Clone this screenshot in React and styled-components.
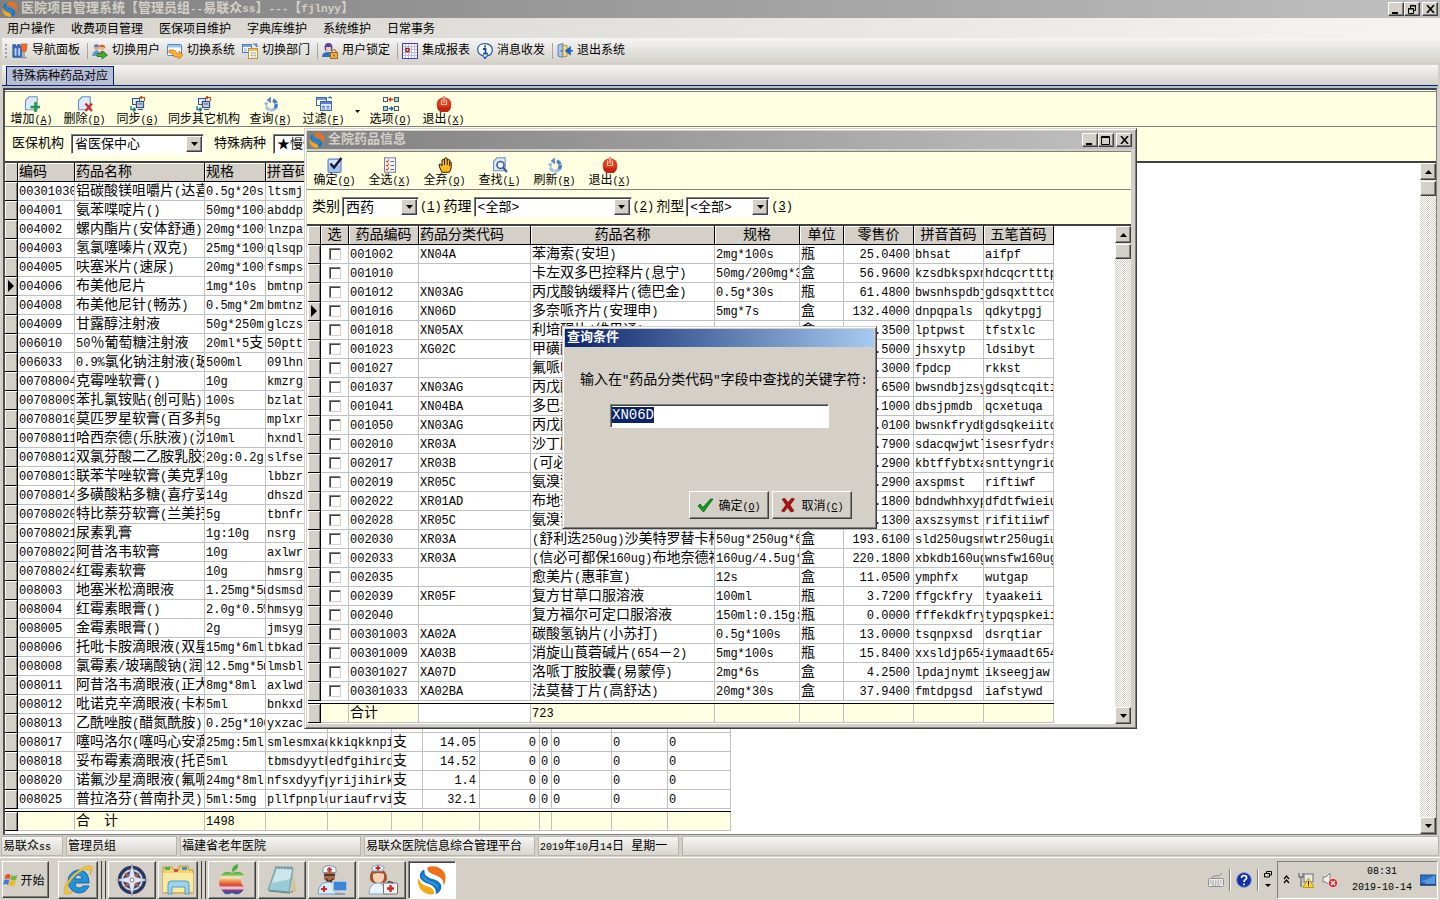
import React, { useEffect, useRef } from "react";
import styled, { createGlobalStyle, css } from "styled-components";

const GlobalStyle = createGlobalStyle`
  * {
    box-sizing: border-box;
  }
  html, body {
    margin: 0;
    height: 100%;
    overflow: hidden;
  }
  body, button, input, select, table {
    font-family: "Liberation Mono", "Noto Sans CJK SC", monospace;
    font-size: 12px;
    color: #000;
  }
  button {
    margin: 0;
    padding: 0;
    border: 0;
    background: none;
    white-space: nowrap;
  }
`;

const raised = css`
  border: 1px solid;
  border-color: #fff #404040 #404040 #fff;
  box-shadow: inset -1px -1px #808080;
  background: #d4d0c8;
`;

const sunken = css`
  border: 1px solid;
  border-color: #808080 #fff #fff #808080;
  box-shadow: inset 1px 1px #404040;
  background: #fff;
`;

const Latin = styled.span`
  font-size: calc(1em - 2px);
  line-height: 1px;
`;

// half width characters are set two pixels smaller than the hanzi
const Mixed = ({ children }) =>
  String(children)
    .split(/([\x21-\x7e]+)/)
    .map((part, i) => (i % 2 ? <Latin key={i}>{part}</Latin> : part));

const Hot = ({ k }) => (
  <Latin>
    (<u>{k}</u>)
  </Latin>
);

/* ---------- icons ---------- */

const Svg = ({ size = 16, box = 16, children }) => (
  <svg width={size} height={size} viewBox={`0 0 ${box} ${box}`} aria-hidden="true">
    {children}
  </svg>
);

const LogoIcon = ({ size = 16 }) => (
  <Svg size={size} box={32}>
    <path d="M11 3C18-1 27 3 30 10c1 4 0 10-2 12 1-6-3-9-8-11-5-2-9-3-9-8z" fill="#f07018" />
    <path d="M8 5c-1 6 3 8 9 10 7 2 11 6 8 12-1 2-4 4-5 4 1-6-3-9-8-11C5 18 1 13 4 8c1-2 3-3 4-3z" fill="#1272c4" />
    <path d="M6 9c1 5 6 7 11 9 3 1 6 4 6 8-3-5-7-6-11-8C7 16 5 13 6 9z" fill="#2a9be0" />
    <path d="M2 14c1 6 6 8 10 9 5 2 7 5 6 8-8 2-16-4-17-12 0-2 0-4 1-5z" fill="#f5a818" />
  </Svg>
);

const NavIcon = () => (
  <Svg box={18}>
    <path d="M1 2h3v2h2V2h3v2h2v12H1z" fill="#3d6fc0" stroke="#27508f" />
    <path d="M3 6h2v8H3zM7 6h2v8H7z" fill="#bcd7f5" />
    <path d="M10 1h7l-1 8q-2.500 2-5 0z" fill="#f26b2a" stroke="#b94b18" strokeWidth=".6" />
    <path d="M13.500 10v6M10.500 16.500h6" stroke="#8a8a9a" strokeWidth="1.400" />
  </Svg>
);

const UsersIcon = () => (
  <Svg>
    <circle cx="4.500" cy="4" r="2.800" fill="#e9a178" />
    <path d="M2 4q0-4 5-2L6 4z" fill="#4d87c8" />
    <circle cx="10" cy="4.500" r="2.800" fill="#f0b58e" />
    <path d="M7 4q1-4 6-1v2q-3-2-6-1z" fill="#c65a3b" />
    <path d="M0 13q1-6 6-6l2 6z" fill="#5a98d6" />
    <path d="M5 13q1-5 6-5 3 1 4 5z" fill="#e66a52" />
    <path d="M5 10.500h5V8l5.500 4-5.500 4v-2.500H5z" fill="#3fae3c" stroke="#1d7a25" strokeWidth=".8" />
  </Svg>
);

const SystemIcon = () => (
  <Svg>
    <rect x=".5" y="1.500" width="14" height="11" rx="1" fill="#fff" stroke="#4f86c6" />
    <path d="M1 2h13v2.500H1z" fill="#9cc4ee" />
    <path d="M2 7h4q3 0 4 4h2V8l4 4-4 4v-2H9q-3 0-4-4H2z" fill="#ffb32b" stroke="#c46d0c" strokeWidth=".8" />
  </Svg>
);

const DeptIcon = () => (
  <Svg>
    <rect x=".5" y="1.500" width="9" height="8" fill="#fff" stroke="#4a7fc4" />
    <path d="M1 2h8v2H1z" fill="#79a7e0" />
    <path d="M2 6h3M2 8h3" stroke="#7fa6d8" />
    <path d="M11 1h4v3M13 2l2 2" stroke="#3a6ab8" fill="none" />
    <rect x="6.500" y="5.500" width="9" height="10" fill="#fffdf0" stroke="#c68e2e" />
    <path d="M7 6h8v2H7z" fill="#f2c263" />
    <path d="M8 10h6M8 12.500h6M10 9v6M13 9v6" stroke="#a9a9a9" strokeWidth=".7" />
  </Svg>
);

const LockUserIcon = () => (
  <Svg>
    <path d="M2.500 5q0-5 4-5t4 5l-1 3h-6z" fill="#5a3fa0" />
    <path d="M4 4h5v3q-2.500 3-5 0z" fill="#efc5b4" />
    <path d="M0 14q0-5 6-5 5 0 6 5z" fill="#2f6fb4" />
    <rect x="8.500" y="9.500" width="7" height="6" fill="#f2b04a" stroke="#a8681a" />
    <path d="M10 9V8q2-3 4 0v1" fill="none" stroke="#a8681a" strokeWidth="1.200" />
    <path d="M12 11.500v2" stroke="#5c3608" />
  </Svg>
);

const ReportIcon = () => (
  <Svg>
    <rect x=".5" y=".5" width="15" height="15" fill="#fff" stroke="#4040b8" />
    <path d="M1 3.500h14M1 6.500h14M1 9.500h14M1 12.500h14M3.500 1v14M6.500 1v14M9.500 1v14M12.500 1v14" stroke="#b8b8ec" />
    <rect x="4" y="5.500" width="3" height="3" fill="#fff" stroke="#a01818" strokeWidth="1.400" />
  </Svg>
);

const InfoIcon = () => (
  <Svg>
    <path d="M8 .7c5 0 7.300 3 7.300 6s-2 5.500-5 6L8 15.500 6 12.600c-3-.5-5.300-3-5.300-6S3 .7 8 .7z" fill="#fff" stroke="#1c5bb5" strokeWidth="1.300" />
    <path d="M8 2.500v2M6 6h2.500v4.500M6 10.700h5" stroke="#174a9c" strokeWidth="1.800" fill="none" />
  </Svg>
);

const DoorIcon = () => (
  <Svg>
    <path d="M1 2l5-1.500v14L1 13z" fill="#a9c6ea" stroke="#4d72a8" strokeWidth=".8" />
    <path d="M6 2.500h4v11H6z" fill="#f4dc90" stroke="#a98733" strokeWidth=".8" />
    <circle cx="4.500" cy="8" r=".8" fill="#284a80" />
    <path d="M16 7.800h-3.500M13 4.500L9 7.700l4 3.300z" fill="#1a66c8" stroke="#1a66c8" strokeWidth="1.600" />
  </Svg>
);

const PageShape = () => (
  <path d="M5 .8h8.200v13H1.500V4.500z" fill="#dce9fa" stroke="#6a8fc4" strokeWidth="1.100" />
);

const AddIcon = () => (
  <Svg>
    <PageShape />
    <path d="M11.500 6v10M6.500 11h10" stroke="#1f9a4c" strokeWidth="2.600" />
  </Svg>
);

const DeleteIcon = () => (
  <Svg>
    <PageShape />
    <path d="M8.500 7.500l6.500 7.500M15 7.500L8.500 15" stroke="#d02a2a" strokeWidth="2.200" />
  </Svg>
);

const SyncIcon = () => (
  <Svg>
    <rect x="2.500" y="2.500" width="7" height="6" fill="#e8eef8" stroke="#35507c" />
    <rect x="6.500" y="5.500" width="7" height="6" fill="#cfdcf0" stroke="#35507c" strokeWidth="1.300" />
    <path d="M8 13.500h5M8 8h4" stroke="#35507c" strokeWidth="1.200" />
    <path d="M10 1.500h4.500V5M12 0l-2 1.500L12 3" stroke="#c04820" strokeWidth="1.200" fill="none" />
    <path d="M1 10v3.500h4M3.500 11.500l2 2-2 2" stroke="#17708c" strokeWidth="1.300" fill="none" />
  </Svg>
);

const RefreshIcon = () => (
  <Svg>
    <path d="M10 4a5.200 5.200 0 1 1-7 6" fill="none" stroke="#a4c2e4" strokeWidth="3.400" strokeDasharray="4.500 .7" />
    <path d="M10 4a5.200 5.200 0 0 1 1 9" fill="none" stroke="#4a7cba" strokeWidth="3.400" strokeDasharray="4.500 .7" />
    <path d="M8 .5v7L3.500 4z" fill="#5b8bc8" />
    <path d="M1 7l4-1-1 5z" fill="#8fb2dc" />
  </Svg>
);

const FilterIcon = () => (
  <Svg>
    <rect x=".5" y="1.500" width="10" height="8" fill="#fff" stroke="#3a68b4" />
    <path d="M1 2h9v2H1z" fill="#6e9ada" />
    <path d="M12 1.500h3.500M14 0l1.500 3" stroke="#3a68b4" fill="none" />
    <rect x="4.500" y="5.500" width="11" height="9" fill="#dce9fb" stroke="#3a68b4" />
    <path d="M5 6h10v2H5zM6 10h3v1.500H6zM10.500 10h3v1.500h-3zM6 12.500h3v1H6zM10.500 12.500h3v1h-3z" fill="#5683cc" />
  </Svg>
);

const OptionIcon = () => (
  <Svg>
    <g fill="#fff" stroke="#46566e">
      <rect x=".5" y="1.500" width="4" height="4" />
      <rect x="11.500" y="1.500" width="4" height="4" fill="#9fd4e8" />
      <rect x=".5" y="10.500" width="4" height="4" fill="#9fd4e8" />
      <rect x="11.500" y="10.500" width="4" height="4" />
    </g>
    <path d="M10.500 3.500H6M8 1.500l-2 2 2 2" fill="none" stroke="#c84a18" strokeWidth="1.300" />
    <path d="M5.500 12.500H10M8 10.500l2 2-2 2" fill="none" stroke="#186c94" strokeWidth="1.300" />
  </Svg>
);

const PowerIcon = () => (
  <Svg>
    <circle cx="8" cy="8.500" r="7.300" fill="#e03a1c" />
    <path d="M1 10a7 7 0 0 0 14 0q-7 3-14 0z" fill="#c22410" />
    <path d="M5.500 3.500v5h5v-5" fill="none" stroke="#ffc8a8" strokeWidth="1.200" />
    <path d="M8 0v6.500" stroke="#fff0e0" strokeWidth="2.400" />
    <path d="M8 0v6.500" stroke="#d03a18" strokeWidth="1" />
  </Svg>
);

const CheckDocIcon = () => (
  <Svg>
    <rect x="1" y="2" width="13" height="13.500" rx="1" fill="#a8c0ec" stroke="#5878b8" />
    <path d="M2 3h11v5H2z" fill="#d4e2fa" />
    <path d="M3.500 6.500l3.500 4L14.500 1" fill="none" stroke="#10183c" strokeWidth="2.400" />
  </Svg>
);

const ListIcon = () => (
  <Svg>
    <rect x="2.500" y=".8" width="11" height="14.500" fill="#f4f4fa" stroke="#7c7c98" />
    <path d="M4 4l1.200 1.200L7 2.500M4 8l1.200 1.200L7 6.500M4 12l1.200 1.200L7 10.500" fill="none" stroke="#d05018" strokeWidth="1.100" />
    <path d="M8.500 4.500H12M8.500 8.500H12M8.500 12.500H12" stroke="#60608c" />
  </Svg>
);

const HandIcon = () => (
  <Svg>
    <path d="M5 15.300L2.500 10 2 7.500l1.500-.5L5 9V3l1.500-.7L7.500 3V1.500L9 .7l1.300.8V3l1.300-.5L12.800 3v2l1.400.3V11L12.500 15.300z" fill="#ffb81c" stroke="#2c1c00" />
    <path d="M7.500 3v5M10.200 3v5M12.600 5v4" stroke="#2c1c00" />
  </Svg>
);

const FindIcon = () => (
  <Svg>
    <PageShape />
    <circle cx="8.500" cy="8" r="3.500" fill="#f4faff" stroke="#3a5c98" strokeWidth="1.600" />
    <path d="M11 10.500l4 4.500" stroke="#3a5c98" strokeWidth="2.200" />
  </Svg>
);

const TickIcon = () => (
  <Svg>
    <path d="M1 9l2-2 3 3.500L13.500 2 16 2 6.500 15z" fill="#10a020" stroke="#045c10" strokeWidth=".8" />
  </Svg>
);

const CrossIcon = () => (
  <Svg>
    <path d="M2 2l3-.5L8 5.500 12 1l2.500 1L10 8l4 6-3 1-3.500-4.500L4 15l-2.500-1L6 8z" fill="#b01010" stroke="#6c0404" strokeWidth=".6" />
  </Svg>
);

const FlagIcon = () => (
  <Svg>
    <path d="M2.500 3q3-2 5 0L6.500 7.500q-2.500-1.800-5 0z" fill="#e8502c" />
    <path d="M8.300 3.300q3 1.500 6-.6L13.300 7.500q-3 2-6 .3z" fill="#72b83c" />
    <path d="M1.300 8.300q2.500-1.800 5 0L5 13q-2.500-1.800-5 0z" fill="#3a7cd8" />
    <path d="M7 8.600q3 1.500 6-.4L11.800 13q-3 2-6 .3z" fill="#f6b820" />
  </Svg>
);

const IeIcon = () => (
  <Svg size={32} box={32}>
    <path d="M27 19H13q0 5 4 5 3 0 4-2h6q-3 7-10 7Q7 28 6 18 6 8 16 6q11 0 11 13zm-7-4q0-4-3.500-4T13 15z" fill="#2592d8" stroke="#1268ac" />
    <path d="M3 30Q-1 24 10 12 23 0 29 2q3 2-1 9 1-6-2-6Q19 5 10 15 3 24 6 27q2 2 6 0-6 5-9 3z" fill="#f4c53a" stroke="#c9961a" strokeWidth=".5" />
  </Svg>
);

const CompassIcon = () => (
  <Svg size={32} box={32}>
    <circle cx="16" cy="16" r="12.500" fill="#d8dce6" stroke="#2c3860" strokeWidth="3.500" />
    <circle cx="16" cy="16" r="9" fill="#36406c" />
    <path d="M8 8l6.500 3.500L16 16l-4.500-1.500zM24 8l-3.500 6.500L16 16l1.500-4.500zM8 24l3.500-6.500L16 16l-1.500 4.500zM24 24l-6.500-3.500L16 16l4.500 1.500z" fill="#b06050" />
    <path d="M16 0l3 13 13 3-13 3-3 13-3-13-13-3 13-3z" fill="#e4e8f0" stroke="#8890a8" strokeWidth=".6" />
    <circle cx="16" cy="16" r="2" fill="#fff" stroke="#707898" />
  </Svg>
);

const FolderIcon = () => (
  <Svg size={32} box={32}>
    <path d="M1 3h9l2 3h5V2h9l1 4h4v23H1z" fill="#f0d272" stroke="#c39a35" />
    <path d="M3 3h5v3H3z" fill="#52b04a" />
    <path d="M12 5h4v3h-4z" fill="#d8503c" />
    <path d="M20 3h5v3h-5z" fill="#4a8ed0" />
    <path d="M1 9h30v19H1z" fill="#fbe9a0" />
    <path d="M6 30V20q0-3 3-3h15q3 0 3 3v10h-4v-7H10v7z" fill="#9bd2f0" stroke="#4f9cc8" />
  </Svg>
);

const AppleIcon = () => (
  <Svg size={32} box={32}>
    <defs>
      <linearGradient id="rainbow" x1="0" y1="0" x2="0" y2="1">
        <stop offset=".1" stopColor="#67b545" />
        <stop offset=".25" stopColor="#f2ead0" />
        <stop offset=".4" stopColor="#f19a4a" />
        <stop offset=".6" stopColor="#dc4038" />
        <stop offset=".72" stopColor="#f0e4e8" />
        <stop offset=".84" stopColor="#8c2c6c" />
        <stop offset=".95" stopColor="#2c5cb0" />
      </linearGradient>
    </defs>
    <path d="M16 9q4-2 8-1 3 1 4 3-4 3-3 7 1 4 4 5-2 5-6 7-3 1-7-1-4 2-7 1-5-5-6-11 0-8 6-11 4-1 7 1z" fill="url(#rainbow)" />
    <path d="M16 8q-1-6 6-8 1 6-6 8z" fill="#4fae3c" />
  </Svg>
);

const NotepadIcon = () => (
  <Svg size={32} box={32}>
    <path d="M25 3l6 23-5 4z" fill="#d0c49c" />
    <path d="M10 3l17 1-4 24-21-2z" fill="#9ccad4" stroke="#6898a4" />
    <path d="M11 5l15 1-2 9-18 4z" fill="#cce6ea" />
    <path d="M3 27l20 2 4-2" fill="none" stroke="#607880" />
    <path d="M10 2v3M13 2v3M16 2v3M19 2v3M22 2v3M25 2v3" stroke="#7a8a92" />
  </Svg>
);

const DoctorIcon = () => (
  <Svg size={32} box={32}>
    <path d="M8 8h11v7q-5 7-11 0z" fill="#a86c42" />
    <path d="M7 4q6-5 13 0v5q-6-3-13 0z" fill="#f4f8fc" stroke="#6f98b8" />
    <path d="M13.500 3v5M11 5.500h5" stroke="#d02828" strokeWidth="1.800" />
    <path d="M8 11h11M10 15q4 5 7 0" stroke="#3c2414" strokeWidth="1.500" fill="none" />
    <path d="M2 30q0-12 11-12 6 1 7 6v6z" fill="#d8ecfa" stroke="#6fa0c8" />
    <path d="M8 22v6M5 25h6" stroke="#d02828" strokeWidth="2" />
    <rect x="17" y="17" width="14" height="10" fill="#3c84d4" stroke="#c8d4e0" strokeWidth="1.500" />
    <path d="M19 30h10" stroke="#8ca0b4" strokeWidth="2" />
  </Svg>
);

const NurseIcon = () => (
  <Svg size={32} box={32}>
    <path d="M4 15Q3 5 12 5t9 10q-1 4-5 4H9q-4 0-5-4z" fill="#a2542c" />
    <path d="M7 10q6-2 11 0v4q-1 5-5.500 5T7 14z" fill="#f6d0b0" />
    <path d="M6 3q6-4 12 0l-1 4H7z" fill="#e8f2fa" stroke="#86a8c4" />
    <path d="M12 1.500v5M9.500 4h5" stroke="#d02828" strokeWidth="1.800" />
    <path d="M3 30q0-11 9-11 7 0 8 11z" fill="#e6f2fc" stroke="#86a8c4" />
    <rect x="17.500" y="19" width="14" height="11" rx="1" fill="#f4f4f4" stroke="#707070" />
    <path d="M22 19q0-3 5 0" fill="none" stroke="#505050" strokeWidth="1.500" />
    <path d="M24.500 21v7M21 24.500h7" stroke="#d02828" strokeWidth="2.400" />
  </Svg>
);

/* ---------- shared controls ---------- */

const ComboBox = styled.span`
  display: inline-flex;
  width: ${(p) => p.$width}px;
  height: 20px;
  padding: 1px;
  ${sunken}

  & select {
    flex: 1;
    min-width: 0;
    appearance: none;
    border: 0;
    outline: 0;
    padding: 1px 2px 0;
    background: transparent;
    font-size: ${(p) => p.$size || 13}px;
    line-height: 16px;
  }
`;

const ComboArrow = styled.span`
  display: flex;
  align-items: center;
  justify-content: center;
  width: 16px;
  pointer-events: none;
  ${raised}
`;

const Combo = ({ id, width, size, value }) => (
  <ComboBox $width={width} $size={size}>
    <select id={id} defaultValue={value}>
      <option>{value}</option>
    </select>
    <ComboArrow>
      <svg width="7" height="4" viewBox="0 0 7 4"><path d="M0 0h7L3.500 4z" /></svg>
    </ComboArrow>
  </ComboBox>
);

const Bar = styled.div`
  display: flex;
  flex-direction: column;
  width: 16px;
  background: repeating-conic-gradient(#d4d0c8 0 25%, #fff 0 50%) 0 0 / 2px 2px;

  & button {
    display: flex;
    align-items: center;
    justify-content: center;
    width: 16px;
    height: 17px;
    ${raised}
  }
  & .thumb {
    height: 15px;
    margin: 1px 0 auto;
  }
`;

const ScrollBar = () => (
  <Bar>
    <button aria-label="向上">
      <svg width="7" height="4" viewBox="0 0 7 4"><path d="M0 4h7L3.500 0z" /></svg>
    </button>
    <button className="thumb" aria-label="滚动" />
    <button aria-label="向下">
      <svg width="7" height="4" viewBox="0 0 7 4"><path d="M0 0h7L3.500 4z" /></svg>
    </button>
  </Bar>
);

const TitleBar = styled.header`
  display: flex;
  align-items: center;
  flex-shrink: 0;
  gap: 3px;
  height: 18px;
  padding: 0 2px;
  background: linear-gradient(90deg, ${(p) => (p.$active ? "#0a246a, #a6caf0" : "#808080, #c0c0c0")});

  & h1 {
    flex: 1;
    margin: 0;
    font-size: 13px;
    line-height: 20px;
    font-weight: 700;
    white-space: nowrap;
    color: ${(p) => (p.$active ? "#fff" : "#d4d0c8")};
  }
`;

const Controls = styled.div`
  display: flex;

  & button {
    display: flex;
    align-items: center;
    justify-content: center;
    width: 16px;
    height: 14px;
    ${raised}
  }
  & button:last-child {
    margin-left: 2px;
  }
`;

const WindowControls = ({ restore }) => (
  <Controls>
    <button aria-label="最小化">
      <svg width="10" height="9"><path d="M1 7h6v2H1z" /></svg>
    </button>
    <button aria-label={restore ? "还原" : "最大化"}>
      <svg width="10" height="9" fill="none" stroke="#000">
        {restore ? (
          <>
            <path d="M3.500 3V.5h5v5H7M3 1h6" />
            <path d="M1.500 3.500h5v5h-5zM1 4h6" />
          </>
        ) : (
          <path d="M.5.5h8v8h-8zM0 1.500h9" />
        )}
      </svg>
    </button>
    <button aria-label="关闭">
      <svg width="9" height="8"><path d="M1 0l7 8M8 0L1 8" stroke="#000" strokeWidth="1.600" /></svg>
    </button>
  </Controls>
);

/* ---------- main window ---------- */

const Desktop = styled.div`
  display: flex;
  flex-direction: column;
  height: 100vh;
  background: #d4d0c8;
`;

const MenuBar = styled.nav`
  display: flex;
  align-items: center;
  gap: 16px;
  height: 20px;
  padding: 0 7px;
  background: linear-gradient(90deg, #d6d3ce, #f5f4f2);
`;

const ToolStrip = styled.div`
  display: flex;
  align-items: center;
  gap: 7px;
  height: 25px;
  margin-left: 2px;
  padding-left: 3px;
  background: linear-gradient(#f6f5f4, #d4d1ca);
`;

const Grip = styled.span`
  width: 2px;
  height: 14px;
  margin-right: -2px;
  background: repeating-linear-gradient(#a0a0a0 0 2px, transparent 2px 4px);
`;

const ToolButton = styled.button`
  display: flex;
  align-items: center;
  gap: 4px;
  line-height: 20px;
`;

const Divider = styled.i`
  width: 1px;
  height: 16px;
  margin-right: -3px;
  background: #a6a6a6;
`;

const TabStrip = styled.div`
  display: flex;
  align-items: flex-end;
  height: 21px;
  margin: 2px 2px 2px;
  padding-left: 4px;
  border-bottom: 1px solid #0a246a;
  background: linear-gradient(#f6f5f4, #d4d1ca);
  box-shadow: 0 2px #b6bed6;
`;

const Tab = styled.button`
  height: 19px;
  padding: 1px 5px 0;
  border: 1px solid #0a246a;
  border-bottom: 0;
  background: #b6bed6;
  line-height: 18px;
`;

const Workspace = styled.main`
  display: flex;
  flex-direction: column;
  flex: 1;
  min-height: 0;
  margin: 0 3px 0 3px;
  padding-top: 1px;
  border: 1px solid #808080;
  border-top: 2px solid #404040;
  border-left: 2px solid #505050;
  background: #fff;
`;

const ActionBar = styled.div`
  display: flex;
  align-items: flex-end;
  height: ${(p) => p.$height}px;
  padding-bottom: ${(p) => p.$pad || 0}px;
  border-top: 1px solid #808080;
  border-bottom: 1px solid #808080;
  background: #ffffe1;
`;

const ActionButton = styled.button`
  display: flex;
  flex-direction: column;
  align-items: center;
  gap: 2px;
  width: ${(p) => p.$width}px;
  line-height: 12px;
`;

const MoreButton = styled.button`
  display: flex;
  align-items: center;
  justify-content: center;
  width: 14px;
  height: 30px;
`;

const FilterBar = styled.div`
  display: flex;
  align-items: center;
  height: ${(p) => p.$height}px;
  padding: 0 ${(p) => p.$pad}px;
  background: #ffffe1;
  font-size: ${(p) => p.$size}px;
  line-height: 18px;
  white-space: nowrap;

  & label {
    margin-right: ${(p) => p.$space}px;
  }
  & label ~ label {
    margin-left: ${(p) => p.$between || 0}px;
  }
`;

const Hint = styled.span`
  margin: 0 2px 0 1px;
  font-size: 12px;
`;

const GridArea = styled.section`
  display: flex;
  justify-content: space-between;
  flex: 1;
  min-height: 0;
  overflow: hidden;
  padding-left: ${(p) => p.$pad || 0}px;
  border-top: 2px solid #404040;
  background: #fff;
`;

const cellText = css`
  height: 19px;
  padding: 0 1px;
  overflow: hidden;
  white-space: nowrap;
  font-size: 14px;
  line-height: 18px;
`;

const Grid = styled.table`
  align-self: flex-start;
  flex-shrink: 0;
  table-layout: fixed;
  width: ${(p) => p.$width}px;
  border-spacing: 0;

  & thead th {
    ${cellText}
    text-align: ${(p) => p.$head};
    font-weight: 400;
    background: #d4d0c8;
    border-right: 1px solid #000;
    border-bottom: 1px solid #000;
    box-shadow: inset 1px 1px #fff;
  }
  & thead th:nth-child(${(p) => p.$leftHead || 99}) {
    text-align: left;
  }
  & td {
    ${cellText}
    border-right: 1px solid #c0c0c0;
    border-bottom: 1px solid #c0c0c0;
  }
  & td.num {
    text-align: right;
    padding-right: 3px;
  }
  & tbody th, & tfoot th {
    height: 19px;
    padding: 0;
    line-height: 0;
    background: #d4d0c8;
    border-right: 1px solid #000;
    border-bottom: 1px solid #000;
    box-shadow: inset 1px 1px #fff, inset -1px 0 #808080;
  }
  & tfoot td {
    background: #ffffe1;
  }
  & tfoot td.plain {
    background: #fff;
  }
  & tfoot .gap td {
    height: ${(p) => p.$gap}px;
    padding: 0;
    line-height: 0;
    background: #fff;
    border-right: 0;
    border-bottom: 1px solid #000;
  }
  & input {
    display: block;
    appearance: none;
    width: 12px;
    height: 12px;
    margin: 0 auto;
    ${sunken}
    border-color: #808080 #d4d0c8 #d4d0c8 #808080;
  }
`;

const Marker = () => (
  <svg width="6" height="12" viewBox="0 0 6 12"><path d="M0 0l6 6-6 6z" /></svg>
);

const mainCols = [13, 57, 130, 61, 62, 64, 31, 57, 60, 12, 60, 56, 63];
const mainHead = ["", "编码", "药品名称", "规格", "拼音码", "五笔码", "单位", "单价", "", "", "", "", ""];
const mainRows = [
  ["00301030", "铝碳酸镁咀嚼片(达喜)", "0.5g*20s", "ltsmj"],
  ["004001", "氨苯喋啶片()", "50mg*100s", "abddp"],
  ["004002", "螺内酯片(安体舒通)", "20mg*100s", "lnzpa"],
  ["004003", "氢氯噻嗪片(双克)", "25mg*100s", "qlsqp"],
  ["004005", "呋塞米片(速尿)", "20mg*100s", "fsmps"],
  ["004006", "布美他尼片", "1mg*10s", "bmtnp"],
  ["004008", "布美他尼针(畅苏)", "0.5mg*2ml", "bmtnz"],
  ["004009", "甘露醇注射液", "50g*250ml", "glczs"],
  ["006010", "50％葡萄糖注射液", "20ml*5支", "50ptt"],
  ["006033", "0.9%氯化钠注射液(玻)", "500ml", "09lhn"],
  ["00708004", "克霉唑软膏()", "10g", "kmzrg"],
  ["00708009", "苯扎氯铵贴(创可贴)", "100s", "bzlat"],
  ["00708010", "莫匹罗星软膏(百多邦)", "5g", "mplxr"],
  ["00708011", "哈西奈德(乐肤液)(沈)", "10ml", "hxndl"],
  ["00708012", "双氯芬酸二乙胺乳胶剂", "20g:0.2g", "slfse"],
  ["00708013", "联苯苄唑软膏(美克乳膏)", "10g", "lbbzr"],
  ["00708014", "多磺酸粘多糖(喜疗妥)", "14g", "dhszd"],
  ["00708020", "特比萘芬软膏(兰美抒)", "5g", "tbnfr"],
  ["00708021", "尿素乳膏", "1g:10g", "nsrg"],
  ["00708022", "阿昔洛韦软膏", "10g", "axlwr"],
  ["00708024", "红霉素软膏", "10g", "hmsrg"],
  ["008003", "地塞米松滴眼液", "1.25mg*5ml", "dsmsd"],
  ["008004", "红霉素眼膏()", "2.0g*0.5%", "hmsyg"],
  ["008005", "金霉素眼膏()", "2g", "jmsyg"],
  ["008006", "托吡卡胺滴眼液(双星)", "15mg*6ml", "tbkad"],
  ["008008", "氯霉素/玻璃酸钠(润)", "12.5mg*5ml", "lmsbl"],
  ["008011", "阿昔洛韦滴眼液(正大)", "8mg*8ml", "axlwd"],
  ["008012", "吡诺克辛滴眼液(卡林)", "5ml", "bnkxd"],
  ["008013", "乙酰唑胺(醋氮酰胺)", "0.25g*100s", "yxzac", "", "瓶"],
  ["008017", "噻吗洛尔(噻吗心安滴)", "25mg:5ml", "smlesmxad", "kkiqkknpi", "支", "14.05", "0", "0", "0", "0", "0"],
  ["008018", "妥布霉素滴眼液(托百)", "5ml", "tbmsdyytb", "edfgihird", "支", "14.52", "0", "0", "0", "0", "0"],
  ["008020", "诺氟沙星滴眼液(氟哌)", "24mg*8ml", "nfsxdyyfp", "yrijihirk", "支", "1.4", "0", "0", "0", "0", "0"],
  ["008025", "普拉洛芬(普南扑灵);", "5ml:5mg", "pllfpnplo", "uriaufrvi", "支", "32.1", "0", "0", "0", "0", "0"],
];

const drugCols = [13, 28, 70, 112, 184, 85, 44, 70, 70, 70];
const drugHead = ["", "选", "药品编码", "药品分类代码", "药品名称", "规格", "单位", "零售价", "拼音首码", "五笔首码"];
const drugRows = [
  ["001002", "XN04A", "苯海索(安坦)", "2mg*100s", "瓶", "25.0400", "bhsat", "aifpf"],
  ["001010", "", "卡左双多巴控释片(息宁)", "50mg/200mg*30", "盒", "56.9600", "kzsdbkspxn", "hdcqcrtttp"],
  ["001012", "XN03AG", "丙戊酸钠缓释片(德巴金)", "0.5g*30s", "瓶", "61.4800", "bwsnhspdbj", "gdsqxtttcq"],
  ["001016", "XN06D", "多奈哌齐片(安理申)", "5mg*7s", "盒", "132.4000", "dnpqpals", "qdkytpgj"],
  ["001018", "XN05AX", "利培酮片(维思通)", "", "盒", ".3500", "lptpwst", "tfstxlc"],
  ["001023", "XG02C", "甲磺酸", "", "", ".5000", "jhsxytp", "ldsibyt"],
  ["001027", "", "氟哌啶", "", "", ".3000", "fpdcp", "rkkst"],
  ["001037", "XN03AG", "丙戊酸", "", "", ".6500", "bwsndbjzsy", "gdsqtcqiti"],
  ["001041", "XN04BA", "多巴丝", "", "", ".1000", "dbsjpmdb", "qcxetuqa"],
  ["001050", "XN03AG", "丙戊酸", "", "", ".0100", "bwsnkfrydb", "gdsqkeiitq"],
  ["002010", "XR03A", "沙丁胺", "", "", ".7900", "sdacqwjwtl", "isesrfydrs"],
  ["002017", "XR03B", "(可必特)", "", "", ".2900", "kbtffybtxa", "snttyngriq"],
  ["002019", "XR05C", "氨溴索", "", "", ".2900", "axspmst", "riftiwf"],
  ["002022", "XR01AD", "布地奈", "", "", ".1800", "bdndwhhxyp", "dfdtfwieiu"],
  ["002028", "XR05C", "氨溴索", "", "", ".1300", "axszsymst", "rifitiiwf"],
  ["002030", "XR03A", "(舒利迭250ug)沙美特罗替卡松", "50ug*250ug*60", "盒", "193.6100", "sld250ugsm", "wtr250ugiu"],
  ["002033", "XR03A", "(信必可都保160ug)布地奈德福", "160ug/4.5ug*", "盒", "220.1800", "xbkdb160ug", "wnsfw160ug"],
  ["002035", "", "愈美片(惠菲宣)", "12s", "盒", "11.0500", "ymphfx", "wutgap"],
  ["002039", "XR05F", "复方甘草口服溶液", "100ml", "瓶", "3.7200", "ffgckfry", "tyaakeii"],
  ["002040", "", "复方福尔可定口服溶液", "150ml:0.15g:", "瓶", "0.0000", "fffekdkfry", "typqspkeii"],
  ["00301003", "XA02A", "碳酸氢钠片(小苏打)", "0.5g*100s", "瓶", "13.0000", "tsqnpxsd", "dsrqtiar"],
  ["00301009", "XA03B", "消旋山莨菪碱片(654－2)", "5mg*100s", "瓶", "15.8400", "xxsldjp654", "iymaadt654"],
  ["00301027", "XA07D", "洛哌丁胺胶囊(易蒙停)", "2mg*6s", "盒", "4.2500", "lpdajnymt", "ikseegjaw"],
  ["00301033", "XA02BA", "法莫替丁片(高舒达)", "20mg*30s", "盒", "37.9400", "fmtdpgsd", "iafstywd"],
];

const Cols = ({ widths }) => (
  <colgroup>
    {widths.map((w, i) => (
      <col key={i} style={{ width: w }} />
    ))}
  </colgroup>
);

const Head = ({ names }) => (
  <thead>
    <tr>
      {names.map((name, i) => (
        <th key={i}>{name}</th>
      ))}
    </tr>
  </thead>
);

const MainGrid = () => (
  <Grid $width={726} $head="left" $gap={3}>
    <Cols widths={mainCols} />
    <Head names={mainHead} />
    <tbody>
      {mainRows.map((row) => (
        <tr key={row[0]}>
          <th>{row[0] === "004006" && <Marker />}</th>
          {mainCols.slice(1).map((_, i) => (
            <td key={i} className={i === 6 || i === 7 ? "num" : undefined}>
              <Mixed>{row[i] || ""}</Mixed>
            </td>
          ))}
        </tr>
      ))}
    </tbody>
    <tfoot>
      <tr className="gap">
        <td colSpan={13} />
      </tr>
      <tr>
        <th />
        <td />
        <td>合　计</td>
        <td>
          <Latin>1498</Latin>
        </td>
        {mainCols.slice(4).map((_, i) => (
          <td key={i} />
        ))}
      </tr>
    </tfoot>
  </Grid>
);

const DrugGrid = () => (
  <Grid $width={746} $head="center" $leftHead={4} $gap={3}>
    <Cols widths={drugCols} />
    <Head names={drugHead} />
    <tbody>
      {drugRows.map((row) => (
        <tr key={row[0]}>
          <th>{row[0] === "001016" && <Marker />}</th>
          <td>
            <input type="checkbox" aria-label={row[0]} />
          </td>
          {row.map((value, i) => (
            <td key={i} className={i === 5 ? "num" : undefined}>
              <Mixed>{value}</Mixed>
            </td>
          ))}
        </tr>
      ))}
    </tbody>
    <tfoot>
      <tr className="gap">
        <td colSpan={10} />
      </tr>
      <tr>
        <th />
        <td />
        <td>合计</td>
        <td className="plain" />
        <td>
          <Latin>723</Latin>
        </td>
        {drugCols.slice(5).map((_, i) => (
          <td key={i} />
        ))}
      </tr>
    </tfoot>
  </Grid>
);

const StatusBar = styled.footer`
  display: flex;
  flex-shrink: 0;
  gap: 3px;
  height: 21px;
  margin-top: 1px;
  padding: 0 1px 1px;
`;

const Panel = styled.span`
  flex: ${(p) => (p.$width ? "none" : 1)};
  width: ${(p) => p.$width}px;
  height: 20px;
  padding: 1px 1px 0;
  border: 1px solid #b8b5ae;
  background: linear-gradient(#f6f5f4, #d8d5ce);
  line-height: 18px;
  white-space: nowrap;
`;

/* ---------- taskbar ---------- */

const TaskBar = styled.nav`
  display: flex;
  align-items: center;
  flex-shrink: 0;
  height: 43px;
  padding: 1px 2px 0;
  border-top: 1px solid #fff;
`;

const StartButton = styled.button`
  display: flex;
  align-items: center;
  justify-content: center;
  gap: 1px;
  width: 47px;
  height: 37px;
  margin-right: 9px;
  padding-right: 3px;
  ${raised}
`;

const TaskButton = styled.button`
  display: flex;
  align-items: center;
  justify-content: center;
  width: 48px;
  height: 38px;
  margin-right: 2px;
  ${(p) => (p.$pressed ? sunken : raised)}
`;

const TaskStack = styled.span`
  display: flex;
  width: 48px;
  height: 38px;
  margin-right: 2px;
  border-right: 1px solid #404040;
  box-shadow: inset -3px 0 #d4d0c8, inset -4px 0 #404040;

  & ${TaskButton} {
    width: 40px;
    margin: 0;
  }
`;

const Tray = styled.div`
  display: flex;
  align-items: center;
  gap: 5px;
  margin-left: auto;
`;

const Clock = styled.div`
  display: flex;
  align-items: center;
  justify-content: space-between;
  width: 161px;
  height: 38px;
  padding: 0 1px 0 5px;
  border: 1px solid;
  border-color: #808080 #fff #fff #808080;

  & time {
    margin: 0 0 0 6px;
    font-size: 10px;
    line-height: 16px;
    text-align: center;
  }
`;

const Rule = styled.i`
  width: 2px;
  height: 22px;
  border-left: 1px solid #808080;
  border-right: 1px solid #fff;
`;

/* ---------- floating windows ---------- */

const Window = styled.section`
  position: absolute;
  left: ${(p) => p.$left}px;
  top: ${(p) => p.$top}px;
  width: ${(p) => p.$width}px;
  height: ${(p) => p.$height}px;
  display: flex;
  flex-direction: column;
  padding: 2px;
  border: 1px solid;
  border-color: #d4d0c8 #404040 #404040 #d4d0c8;
  box-shadow: inset 1px 1px #fff, inset -1px -1px #808080;
  background: #d4d0c8;
`;

const Frame = styled.div`
  display: flex;
  flex-direction: column;
  flex: 1;
  min-height: 0;
  margin-top: 2px;
  padding: 0 3px 2px 0;
`;

const Prompt = styled.form`
  display: flex;
  flex-direction: column;
  flex: 1;
  padding: 23px 22px 7px 15px;

  & label {
    font-size: 14px;
    line-height: 20px;
    white-space: nowrap;
  }
  & input {
    width: 219px;
    height: 24px;
    margin: 14px 0 auto 30px;
    padding: 0 1px 2px;
    outline: 0;
    font-size: 14px;
    ${sunken}
  }
  & input::selection {
    background: #0a246a;
    color: #fff;
  }
  & div {
    display: flex;
    justify-content: flex-end;
    gap: 3px;
  }
`;

const PushButton = styled.button`
  display: flex;
  align-items: center;
  justify-content: center;
  gap: 5px;
  width: 80px;
  height: 28px;
  ${raised}
`;

const QueryDialog = () => {
  const input = useRef(null);

  useEffect(() => {
    input.current.focus();
    input.current.select();
  }, []);

  return (
    <Window $left={562} $top={326} $width={315} $height={203} role="dialog" aria-label="查询条件">
      <TitleBar $active>
        <h1>查询条件</h1>
      </TitleBar>
      <Prompt onSubmit={(e) => e.preventDefault()}>
        <label htmlFor="keyword">
          <Mixed>{'输入在"药品分类代码"字段中查找的关键字符:'}</Mixed>
        </label>
        <input id="keyword" ref={input} defaultValue="XN06D" />
        <div>
          <PushButton>
            <TickIcon />
            <span>确定<Hot k="O" /></span>
          </PushButton>
          <PushButton type="button">
            <CrossIcon />
            <span>取消<Hot k="C" /></span>
          </PushButton>
        </div>
      </Prompt>
    </Window>
  );
};

const drugActions = [
  ["确定", "O", CheckDocIcon],
  ["全选", "X", ListIcon],
  ["全弃", "Q", HandIcon],
  ["查找", "L", FindIcon],
  ["刷新", "R", RefreshIcon],
  ["退出", "X", PowerIcon],
];

const DrugWindow = () => (
  <Window $left={304} $top={128} $width={833} $height={601}>
    <TitleBar>
      <LogoIcon />
      <h1>全院药品信息</h1>
      <WindowControls />
    </TitleBar>
    <Frame>
      <ActionBar $height={39} $pad={2}>
        {drugActions.map(([label, k, Icon]) => (
          <ActionButton key={label} $width={55}>
            <Icon />
            <span>{label}<Hot k={k} /></span>
          </ActionButton>
        ))}
      </ActionBar>
      <FilterBar $height={34} $pad={5} $space={2} $size={14}>
        <label htmlFor="kind">类别</label>
        <Combo id="kind" width={77} size={14} value="西药" />
        <Hint>(<u>1</u>)</Hint>
        <label htmlFor="pharma">药理</label>
        <Combo id="pharma" width={158} size={13} value="<全部>" />
        <Hint>(<u>2</u>)</Hint>
        <label htmlFor="form">剂型</label>
        <Combo id="form" width={84} size={13} value="<全部>" />
        <Hint>(<u>3</u>)</Hint>
      </FilterBar>
      <GridArea $pad={1}>
        <DrugGrid />
        <ScrollBar />
      </GridArea>
    </Frame>
  </Window>
);

const mainActions = [
  ["增加", "A", AddIcon],
  ["删除", "D", DeleteIcon],
  ["同步", "G", SyncIcon],
  ["同步其它机构", "", SyncIcon, 80],
  ["查询", "R", RefreshIcon],
  ["过滤", "F", FilterIcon],
];

const tools = [
  ["导航面板", NavIcon, true],
  ["切换用户", UsersIcon],
  ["切换系统", SystemIcon],
  ["切换部门", DeptIcon, true],
  ["用户锁定", LockUserIcon, true],
  ["集成报表", ReportIcon],
  ["消息收发", InfoIcon, true],
  ["退出系统", DoorIcon],
];

const App = () => {
  return (
    <Desktop>
      <GlobalStyle />
      <TitleBar>
        <LogoIcon />
        <h1><Mixed>医院项目管理系统【管理员组--易联众ss】---【fjlnyy】</Mixed></h1>
        <WindowControls restore />
      </TitleBar>
      <MenuBar>
        {["用户操作", "收费项目管理", "医保项目维护", "字典库维护", "系统维护", "日常事务"].map((name) => (
          <button key={name}>{name}</button>
        ))}
      </MenuBar>
      <ToolStrip>
        <Grip />
        {tools.map(([label, Icon, divided]) => (
          <React.Fragment key={label}>
            <ToolButton>
              <Icon />
              {label}
            </ToolButton>
            {divided && <Divider />}
          </React.Fragment>
        ))}
      </ToolStrip>
      <TabStrip>
        <Tab>特殊病种药品对应</Tab>
      </TabStrip>
      <Workspace>
        <ActionBar $height={36}>
          {mainActions.map(([label, k, Icon, width]) => (
            <ActionButton key={label} $width={width || 53}>
              <Icon />
              <span>{label}{k && <Hot k={k} />}</span>
            </ActionButton>
          ))}
          <MoreButton aria-label="更多">
            <svg width="5" height="3" viewBox="0 0 5 3"><path d="M0 0h5L2.500 3z" /></svg>
          </MoreButton>
          <ActionButton $width={53}>
            <OptionIcon />
            <span>选项<Hot k="O" /></span>
          </ActionButton>
          <ActionButton $width={53}>
            <PowerIcon />
            <span>退出<Hot k="X" /></span>
          </ActionButton>
        </ActionBar>
        <FilterBar $height={34} $pad={7} $space={7} $size={13} $between={10}>
          <label htmlFor="org">医保机构</label>
          <Combo id="org" width={133} value="省医保中心" />
          <label htmlFor="disease">特殊病种</label>
          <Combo id="disease" width={133} value="★慢性病" />
        </FilterBar>
        <GridArea>
          <MainGrid />
          <ScrollBar />
        </GridArea>
      </Workspace>
      <StatusBar>
        <Panel $width={62}><Mixed>易联众ss</Mixed></Panel>
        <Panel $width={111}>管理员组</Panel>
        <Panel $width={181}>福建省老年医院</Panel>
        <Panel $width={171}>易联众医院信息综合管理平台</Panel>
        <Panel $width={141}><Mixed>2019年10月14日 星期一</Mixed></Panel>
        <Panel />
      </StatusBar>
      <TaskBar>
        <StartButton>
          <FlagIcon />
          开始
        </StartButton>
        <TaskStack><TaskButton aria-label="浏览器"><IeIcon /></TaskButton></TaskStack>
        <TaskButton aria-label="指南针"><CompassIcon /></TaskButton>
        <TaskStack><TaskButton aria-label="文件夹"><FolderIcon /></TaskButton></TaskStack>
        <TaskButton aria-label="苹果"><AppleIcon /></TaskButton>
        <TaskButton aria-label="记事本"><NotepadIcon /></TaskButton>
        <TaskButton aria-label="医生"><DoctorIcon /></TaskButton>
        <TaskButton aria-label="护士"><NurseIcon /></TaskButton>
        <TaskButton aria-label="易联众" $pressed><LogoIcon size={30} /></TaskButton>
        <Tray>
          <Svg>
            <rect x=".5" y="6.500" width="15" height="8" rx="1" fill="#ececec" stroke="#8c8c8c" />
            <path d="M2 9h12M2 11h12M4 13h8" stroke="#8c8c8c" strokeDasharray="1.500 1" />
            <path d="M4 6q0-3 4-2t6-3" fill="none" stroke="#8c8c8c" />
          </Svg>
          <Rule />
          <Svg>
            <circle cx="8" cy="8" r="7.300" fill="#1430a8" stroke="#6c84d0" />
            <path d="M5.500 6q0-2.500 2.600-2.500T10.600 6q0 1-1.300 1.700T8 10M8 11.500v1.700" fill="none" stroke="#fff" strokeWidth="1.700" />
          </Svg>
          <Rule />
          <svg width="8" height="18" fill="none" stroke="#000">
            <path d="M2.500 3V.5h5V4H6M.5 2.500h5V6h-5z" />
            <path d="M1 13h6L4 16z" fill="#000" stroke="none" />
          </svg>
          <Clock>
            <svg width="7" height="9" fill="none" stroke="#000" strokeWidth="1.200">
              <path d="M1 4l2.500-3L6 4M1 8l2.500-3L6 8" />
            </svg>
            <Svg>
              <path d="M1 1v4h2v10M5 1v4H3" fill="none" stroke="#707070" strokeWidth="1.300" />
              <rect x="6" y="2" width="9" height="8" fill="#e8e8e8" stroke="#707070" />
              <path d="M10.500 6L16 15.500H5z" fill="#ffd820" stroke="#a88400" strokeWidth=".7" />
              <path d="M10.500 9v3.500M10.500 13.300v1" stroke="#000" />
            </Svg>
            <Svg>
              <path d="M1 5h3l4-4v13l-4-4H1z" fill="#f0f0f0" stroke="#808080" />
              <circle cx="11" cy="11" r="4.600" fill="#e02828" stroke="#fff" strokeWidth=".6" />
              <path d="M9 9l4 4M13 9l-4 4" stroke="#fff" strokeWidth="1.400" />
            </Svg>
            <time>
              08:31
              <br />
              2019-10-14
            </time>
            <Svg>
              <rect x="0" y="3" width="16" height="10" fill="#2f6fc0" stroke="#1c4a88" />
              <path d="M1 9q7-1 14-6v9H1z" fill="#5b98e0" />
              <path d="M0 13h16M1 11h4" stroke="#14305c" />
            </Svg>
          </Clock>
        </Tray>
      </TaskBar>
      <DrugWindow />
      <QueryDialog />
    </Desktop>
  );
};

export default App;
